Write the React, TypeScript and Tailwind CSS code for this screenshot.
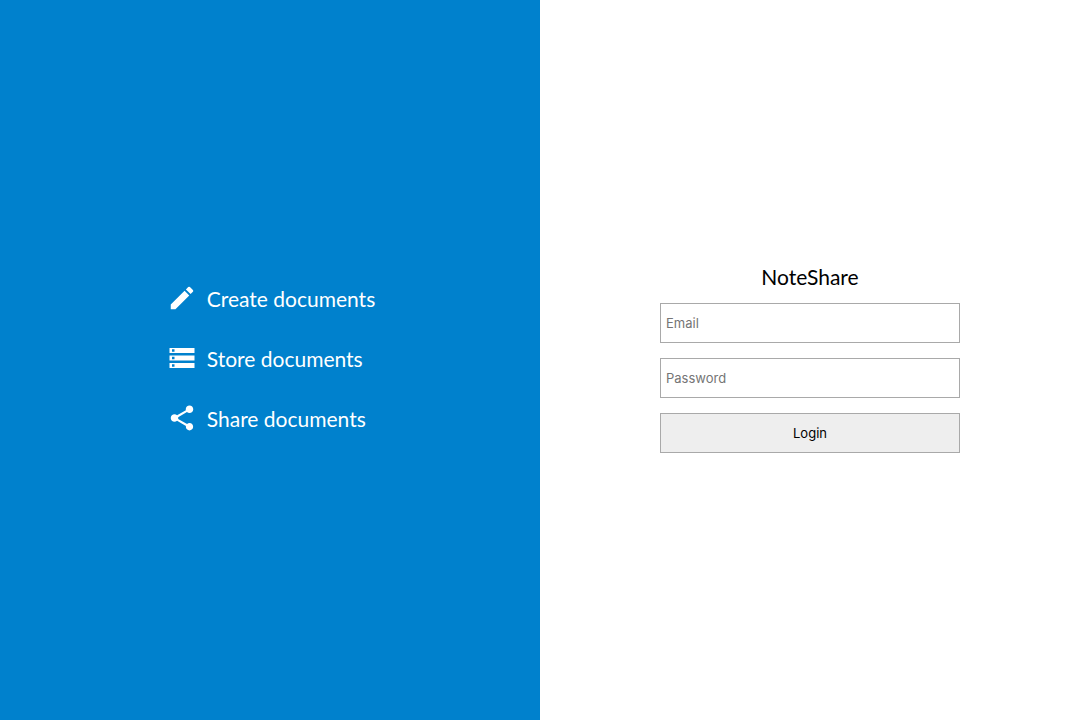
import React from "react";
import { MdCreate, MdStorage, MdShare } from "react-icons/md";

const features = [
  { label: "Create documents", Icon: MdCreate },
  { label: "Store documents", Icon: MdStorage },
  { label: "Share documents", Icon: MdShare },
];

export default function App() {
  return (
    <main className="grid min-h-screen grid-cols-2 bg-white font-['Lato',sans-serif] text-black">
      <section className="flex items-center justify-center bg-[#0081cd] pb-1 pl-0.5 text-white">
        <ul>
          {features.map(({ label, Icon }) => (
            <li key={label} className="flex h-15 items-center gap-2.5 text-[21px]">
              <Icon className="size-[30px]" aria-hidden="true" />
              <span className="pt-px">{label}</span>
            </li>
          ))}
        </ul>
      </section>
      <section className="flex items-center justify-center pb-1">
        <form className="flex w-75 flex-col gap-[15px] font-['Inter',sans-serif] text-[13px]">
          <h1 className="pt-0.5 text-center font-['Lato',sans-serif] text-[21px] leading-[23px]">NoteShare</h1>
          <input type="email" aria-label="Email" placeholder="Email" className="h-10 border border-[#a9a9a9] px-[5px] placeholder:text-[#757575]" />
          <input type="password" aria-label="Password" placeholder="Password" className="h-10 border border-[#a9a9a9] px-[5px] placeholder:text-[#757575]" />
          <button type="submit" className="h-10 border border-[#a9a9a9] bg-[#eeeeee] pt-px">Login</button>
        </form>
      </section>
    </main>
  );
}
